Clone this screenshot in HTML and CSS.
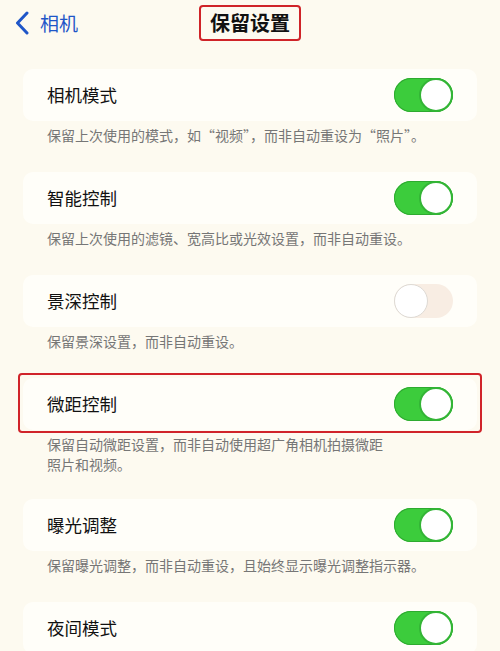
FILE: index.html
```html
<!DOCTYPE html>
<html lang="zh-CN">
<head>
  <meta charset="UTF-8" />
  <meta name="viewport" content="width=device-width, initial-scale=1.0"/>
  <title>保留设置</title>
  <link rel="stylesheet" href="styles.css">
</head>
<body>
  <header class="nav">
    <a class="back" href="#">
      <svg class="chevron" viewBox="0 0 14 24" width="14" height="24">
        <path d="M12 2 L2.5 12 L12 22" fill="none" stroke="currentColor" stroke-width="3" stroke-linecap="round" stroke-linejoin="round"/>
      </svg>
      <span>相机</span>
    </a>
    <h1 class="title">保留设置</h1>
    <span></span>
  </header>

  <main class="list">
    <section class="group">
      <div class="card"><span class="label">相机模式</span><span class="switch on"></span></div>
      <p class="note">保留上次使用的模式，如“视频”，而非自动重设为“照片”。</p>
    </section>

    <section class="group">
      <div class="card"><span class="label">智能控制</span><span class="switch on"></span></div>
      <p class="note">保留上次使用的滤镜、宽高比或光效设置，而非自动重设。</p>
    </section>

    <section class="group">
      <div class="card"><span class="label">景深控制</span><span class="switch"></span></div>
      <p class="note">保留景深设置，而非自动重设。</p>
    </section>

    <section class="group">
      <div class="mark">
        <div class="card"><span class="label">微距控制</span><span class="switch on"></span></div>
      </div>
      <p class="note multi">保留自动微距设置，而非自动使用超广角相机拍摄微距<br>照片和视频。</p>
    </section>

    <section class="group">
      <div class="card"><span class="label">曝光调整</span><span class="switch on"></span></div>
      <p class="note">保留曝光调整，而非自动重设，且始终显示曝光调整指示器。</p>
    </section>

    <section class="group">
      <div class="card"><span class="label">夜间模式</span><span class="switch on"></span></div>
    </section>
  </main>
</body>
</html>
```

FILE: styles.css
```css
body {
  margin: 0;
  background: #fdfaf0;
  font-family: "Noto Sans CJK SC", "Noto Sans", sans-serif;
  color: #111;
}

/* top bar */
.nav {
  display: grid;
  grid-template-columns: 1fr auto 1fr;
  align-items: center;
  padding-top: 5px;
}
.back {
  display: flex;
  align-items: center;
  gap: 11px;
  padding-left: 15px;
  color: #1f56c8;
  text-decoration: none;
  font-size: 19px;
  line-height: 24px;
}
.chevron { display: block; }
.title {
  margin: 0;
  font-size: 20px;
  line-height: 24px;
  font-weight: bold;
  padding: 4px 9px;
  border: 2px solid #cf2328;
  border-radius: 4px;
}

/* settings list */
.list { padding: 28px 23px 0; }
.card {
  display: flex;
  align-items: center;
  justify-content: space-between;
  height: 52px;
  padding: 0 24px;
  background: #fffef9;
  border-radius: 10px;
}
.label { font-size: 17.5px; line-height: 24px; }
.note {
  margin: 5px 0 0;
  padding: 0 24px 28px;
  font-size: 14px;
  line-height: 18px;
  color: #767676;
}
.note.multi {
  margin-top: 4px;
  padding-bottom: 25px;
  line-height: 20px;
}
.mark {
  margin: -5px -5px -3px;
  padding: 3px 3px 1px;
  border: 2px solid #d0232a;
  border-radius: 4px;
}

/* toggle */
.switch {
  position: relative;
  width: 59px;
  height: 34px;
  border-radius: 17px;
  background: #f8ede3;
  flex: none;
}
.switch::after {
  content: "";
  position: absolute;
  top: 0;
  left: 0;
  width: 34px;
  height: 34px;
  box-sizing: border-box;
  border-radius: 50%;
  background: #fff;
  border: 1px solid #dedad4;
}
.switch.on {
  background: #3ccc3c;
  box-shadow: inset 0 0 0 1px #2eaa30;
}
.switch.on::after {
  left: auto;
  right: 0;
  border: 2px solid #33b536;
}
```
